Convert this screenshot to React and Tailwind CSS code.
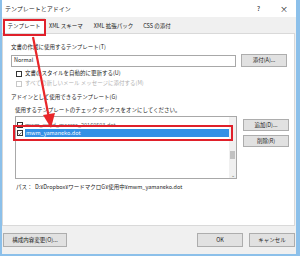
import React from "react";

const font = { fontFamily: '"Noto Sans CJK JP", "Noto Sans", sans-serif' };

function Btn({ children, className = "" }) {
  return (
    <div
      className={`flex items-center justify-center bg-[#e1e1e1] border border-[#adadad] text-[5.5px] text-[#222] ${className}`}
    >
      {children}
    </div>
  );
}

function Check({ className = "" }) {
  return (
    <div className={`flex items-center justify-center w-[6px] h-[6px] border border-[#333] bg-white shrink-0 ${className}`}>
      <svg width="5" height="5" viewBox="0 0 10 10">
        <path d="M1.5 5.2 L4 7.8 L8.8 2.2" fill="none" stroke="#222" strokeWidth="1.6" />
      </svg>
    </div>
  );
}

export default function App() {
  return (
    <div className="relative w-[300px] h-[256px] overflow-hidden bg-white" style={font}>
      <div className="flex flex-col w-[300px] h-[256px] border-l-[2px] border-r-[4px] border-b-[2px] border-[#8cc0ea] bg-[#f0f0f0]">
        {/* Title bar */}
        <div className="flex items-center h-[17px] bg-white pl-[3px] pr-[8px] text-[6px] text-[#222]">
          <span>テンプレートとアドイン</span>
          <span className="ml-auto mr-[20px] text-[6.5px]">?</span>
          <span className="text-[8px] leading-none">×</span>
        </div>

        {/* Tabs */}
        <div className="flex items-end h-[16px] px-[1px] text-[5.5px] text-[#222]">
          <div className="flex items-center justify-center w-[42px] h-[15px] bg-white border border-b-0 border-[#d9d9d9]">
            テンプレート
          </div>
          <div className="flex items-center pl-[4px] pr-[6px] h-[13px]">XML スキーマ</div>
          <div className="flex items-center px-[5px] h-[13px]">XML 拡張パック</div>
          <div className="flex items-center px-[5px] h-[13px]">CSS の添付</div>
        </div>

        {/* Panel */}
        <div className="flex flex-col h-[193px] mr-[1px] bg-white border border-[#d9d9d9] pl-[8px] pr-[3px] pt-[9px] text-[5.5px] text-[#222]">
          <div className="h-[9px] leading-[9px]">文書の作成に使用するテンプレート(T)</div>
          <div className="flex items-center gap-[5px] mt-[2px]">
            <div className="flex items-center w-[225px] h-[12px] border border-[#a8a8a8] pl-[2px]">Normal</div>
            <Btn className="w-[46px] h-[13px]">添付(A)...</Btn>
          </div>
          <div className="flex items-center gap-[3px] mt-[2px] ml-[5px] h-[9px]">
            <div className="w-[6px] h-[6px] border border-[#333] bg-white" />
            <span>文書のスタイルを自動的に更新する(U)</span>
          </div>
          <div className="flex items-center gap-[3px] mt-[1px] ml-[5px] h-[9px] text-[#b0b0b0]">
            <div className="w-[6px] h-[6px] border border-[#c8c8c8] bg-white" />
            <span>すべての新しいメール メッセージに添付する(M)</span>
          </div>
          <div className="mt-[5px] h-[9px] leading-[9px]">アドインとして使用できるテンプレート(G)</div>
          <div className="mt-[4px] ml-[4px] h-[9px] leading-[9px]">使用するテンプレートのチェック ボックスをオンにしてください。</div>
          <div className="flex gap-[6px] mt-[1px] ml-[4px]">
            <div className="flex w-[222px] h-[63px] border border-[#a8a8a8]">
              <div className="flex flex-col flex-1 pt-[4px]">
                <div className="flex items-center gap-[2px] h-[8px] pl-[1px] text-[#666]">
                  <Check />
                  <span>mwm_word_macros_20160503.dot</span>
                </div>
                <div className="flex items-center gap-[2px] h-[8px] pl-[1px]">
                  <Check />
                  <div className="flex items-center flex-1 h-[8px] pl-[1px] bg-[#3390e6] text-white">mwm_yamaneko.dot</div>
                </div>
              </div>
              <div className="flex flex-col w-[7px] bg-[#f0f0f0]">
                <div className="flex-1" />
                <div className="h-[8px] mx-[1px] bg-[#c2c2c2]" />
                <div className="h-[12px]" />
                <div className="h-[7px] text-[5px] leading-[7px] text-center text-[#606060]">⌄</div>
              </div>
            </div>
            <div className="flex flex-col gap-[4px] mt-[3px]">
              <Btn className="w-[46px] h-[12px]">追加(D)...</Btn>
              <Btn className="w-[46px] h-[12px]">削除(R)</Btn>
            </div>
          </div>
          <div className="mt-[4px] ml-[5px] h-[9px] leading-[9px]">パス：&nbsp; D:¥Dropbox¥ワードマクロG¥使用中¥mwm_yamaneko.dot</div>
        </div>

        {/* Footer */}
        <div className="flex items-center flex-1 pl-[1px] pr-[1px] gap-[6px]">
          <Btn className="w-[64px] h-[14px]">構成内容変更(O)...</Btn>
          <div className="flex-1" />
          <Btn className="w-[46px] h-[14px] border-[#0078d7] border-[1.5px]">OK</Btn>
          <Btn className="w-[46px] h-[14px]">キャンセル</Btn>
        </div>
      </div>

      {/* Annotations */}
      <div className="absolute left-[3px] top-[19px] w-[43px] h-[17px] border-[2px] border-[#e0202a]" />
      <div className="absolute left-[13px] top-[125px] w-[220px] h-[16px] border-[2px] border-[#e0202a]" />
      <svg className="absolute left-0 top-0" width="300" height="256" viewBox="0 0 300 256">
        <line x1="33" y1="37" x2="49" y2="118" stroke="#e8262a" strokeWidth="2.2" />
        <polygon points="43,115 55,113 51,128" fill="#e8262a" />
      </svg>
    </div>
  );
}
